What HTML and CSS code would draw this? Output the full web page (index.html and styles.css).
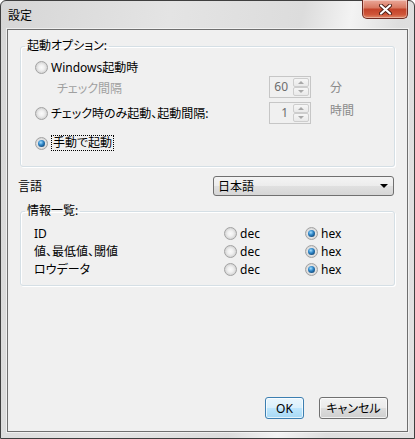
FILE: index.html
```html
<!DOCTYPE html>
<html lang="ja">
<head>
    <meta charset="UTF-8">
    <meta name="viewport" content="width=device-width, initial-scale=1.0">
    <title>設定</title>
    <link rel="stylesheet" href="styles.css">
</head>
<body>
    <div class="window">
        <div class="titlebar">
            <span class="title">設定</span>
            <button class="close" type="button" aria-label="閉じる">
                <svg width="13" height="11" viewBox="0 0 13 11">
                    <path d="M2 1.5 L11 9.5 M11 1.5 L2 9.5" stroke="#4a1d15" stroke-width="4" stroke-linecap="round"/>
                    <path d="M2 1.5 L11 9.5 M11 1.5 L2 9.5" stroke="#fff" stroke-width="2.2" stroke-linecap="round"/>
                </svg>
            </button>
        </div>

        <div class="client">
            <fieldset class="group startup">
                <legend>起動オプション:</legend>
                <div class="startup-grid">
                    <label class="opt row1"><span class="radio"></span>Windows起動時</label>

                    <span class="sub row2">チェック間隔</span>
                    <span class="spin row2">
                        <span class="spin-val">60</span>
                        <span class="spin-btns"><i class="up"></i><i class="down"></i></span>
                    </span>
                    <span class="unit row2">分</span>

                    <label class="opt row3"><span class="radio"></span>チェック時のみ起動、起動間隔:</label>
                    <span class="spin row3">
                        <span class="spin-val">1</span>
                        <span class="spin-btns"><i class="up"></i><i class="down"></i></span>
                    </span>
                    <span class="unit row3">時間</span>

                    <label class="opt row4"><span class="radio on"></span><span class="focus">手動で起動</span></label>
                </div>
            </fieldset>

            <div class="lang">
                <span>言語</span>
                <div class="select">日本語<span class="caret"></span></div>
            </div>

            <fieldset class="group info">
                <legend>情報一覧:</legend>
                <div class="info-grid">
                    <span>ID</span>
                    <label class="opt"><span class="radio"></span>dec</label>
                    <label class="opt"><span class="radio on"></span>hex</label>

                    <span>値、最低値、閾値</span>
                    <label class="opt"><span class="radio"></span>dec</label>
                    <label class="opt"><span class="radio on"></span>hex</label>

                    <span>ロウデータ</span>
                    <label class="opt"><span class="radio"></span>dec</label>
                    <label class="opt"><span class="radio on"></span>hex</label>
                </div>
            </fieldset>

            <div class="actions">
                <button class="btn default" type="button">OK</button>
                <button class="btn" type="button">キャンセル</button>
            </div>
        </div>
    </div>
</body>
</html>
```

FILE: styles.css
```css
* {
    box-sizing: border-box;
}
body {
    margin: 0;
    background: #fff;
    font-family: "Noto Sans", "Noto Sans CJK JP", sans-serif;
    font-size: 12px;
    font-feature-settings: "palt";
    color: #000;
}

/* window frame */
.window {
    width: 415px;
    height: 439px;
    display: flex;
    flex-direction: column;
    padding: 0 6px 6px;
    border: 1px solid #3f3f3f;
    border-radius: 6px 6px 0 0;
    background: linear-gradient(100deg, #d6d6d6 0%, #e4e4e4 35%, #dcdcdc 62%, #f3f3f3 72%, #dedede 82%, #e2e2e2 100%);
}
.titlebar {
    height: 28px;
    flex-shrink: 0;
    display: flex;
    align-items: flex-start;
}
.title {
    margin: 7px 0 0 1px;
    line-height: 16px;
}
.close {
    margin: -1px 0 0 auto;
    width: 46px;
    height: 19px;
    padding: 0;
    display: flex;
    align-items: center;
    justify-content: center;
    border: 1px solid #6e2a22;
    border-top: none;
    border-radius: 0 0 5px 5px;
    background: linear-gradient(#eba899 0%, #d97a63 42%, #c4442b 52%, #cf5539 80%, #e08a6a 100%);
    box-shadow: inset 0 0 0 1px rgba(255, 255, 255, 0.35);
}

/* dialog body */
.client {
    flex: 1;
    display: flex;
    flex-direction: column;
    padding: 8px 12px 12px 12px;
    border: 1px solid #6f6f6f;
    background: #f0f0f0;
    box-shadow: 0 0 0 1px rgba(255, 255, 255, 0.55);
}

.group {
    margin: 0;
    min-width: 0;
    border: 1px solid #d5dfe5;
    border-radius: 3px;
    box-shadow: inset 1px 1px 0 #fff, 1px 1px 0 #fff;
}
.group legend {
    padding: 0 2px;
    line-height: 16px;
}
.startup {
    padding: 4px 12px 13px 14px;
}
.startup legend {
    margin-left: -10px;
}
.info {
    margin-top: 7px;
    padding: 5px 12px 7px 13px;
}
.info legend {
    margin-left: -9px;
}

.opt {
    display: flex;
    align-items: center;
    gap: 3px;
    white-space: nowrap;
}

/* radio buttons */
.radio {
    position: relative;
    flex: none;
    width: 13px;
    height: 13px;
    border: 1px solid #a2a2a2;
    border-radius: 50%;
    background: radial-gradient(circle at 50% 50%, #fafafa 0%, #f0f0f0 35%, #d6d6d6 70%, #eaeaea 100%);
}
.radio.on::after {
    content: "";
    position: absolute;
    inset: 2px;
    border-radius: 50%;
    background: radial-gradient(circle at 40% 35%, #a6e0ff 0%, #2f86c8 40%, #114776 80%, #0b2f52 100%);
}

.startup-grid {
    display: grid;
    grid-template-columns: 215px 42px auto;
    grid-template-rows: 18px 22px 26px 29px;
    column-gap: 19px;
}
.row1 { grid-row: 1; grid-column: 1; }
.row2 { grid-row: 2; }
.row3 { grid-row: 3; align-self: end; }
.row4 { grid-row: 4; grid-column: 1; align-self: end; height: 20px; }
.opt.row3 { height: 22px; }

.sub {
    grid-column: 1;
    align-self: center;
    padding: 2px 0 0 22px;
    color: #a0a0a0;
}
.unit {
    align-self: center;
    color: #8a8a8a;
}
.unit.row3 {
    height: 22px;
    line-height: 22px;
}
.focus {
    border: 1px dotted #000;
    padding: 0 1px;
    line-height: 14px;
}

/* spin boxes, disabled */
.spin {
    height: 22px;
    display: flex;
    padding: 1px;
    border: 1px solid #c6c6c6;
    background: #f0f0f0;
}
.spin-val {
    flex: 1;
    text-align: right;
    padding-right: 5px;
    line-height: 18px;
    color: #6d6d6d;
}
.spin-btns {
    width: 16px;
    display: flex;
    flex-direction: column;
}
.spin-btns i {
    flex: 1;
    display: flex;
    align-items: center;
    justify-content: center;
    border: 1px solid #cdcdcd;
    border-radius: 2px;
    background: linear-gradient(#f6f6f6, #e9e9e9);
}
.spin-btns i::before {
    content: "";
    border-left: 3px solid transparent;
    border-right: 3px solid transparent;
}
.spin-btns .up::before {
    border-bottom: 3px solid #a8a8a8;
}
.spin-btns .down::before {
    border-top: 3px solid #a8a8a8;
}

/* language combo */
.lang {
    height: 20px;
    margin: 9px 1px 0 -2px;
    display: flex;
    align-items: center;
    justify-content: space-between;
}
.select {
    width: 181px;
    height: 20px;
    display: flex;
    align-items: center;
    justify-content: space-between;
    padding: 0 5px 0 4px;
    border: 1px solid #707070;
    border-radius: 3px;
    background: linear-gradient(#f4f4f4 0%, #ececec 50%, #e0e0e0 51%, #d6d6d6 100%);
}
.caret {
    border-left: 4px solid transparent;
    border-right: 4px solid transparent;
    border-top: 4px solid #000;
}

.info-grid {
    display: grid;
    grid-template-columns: 190px 81px auto;
    grid-auto-rows: 18px;
    align-items: center;
}

/* buttons */
.actions {
    margin-top: auto;
    display: flex;
    justify-content: flex-end;
    gap: 15px;
    padding-right: 7px;
}
.btn {
    width: 69px;
    height: 22px;
    padding: 0;
    font: inherit;
    color: #000;
    border: 1px solid #707070;
    border-radius: 3px;
    background: linear-gradient(#f2f2f2 0%, #ebebeb 50%, #dddddd 51%, #cfcfcf 100%);
    box-shadow: inset 0 0 0 1px rgba(255, 255, 255, 0.7);
}
.btn.default {
    width: 39px;
    border-color: #3c7fb1;
    background: linear-gradient(#eaf6fd 0%, #d9f0fc 50%, #bee6fd 51%, #a7d9f5 100%);
}
```
